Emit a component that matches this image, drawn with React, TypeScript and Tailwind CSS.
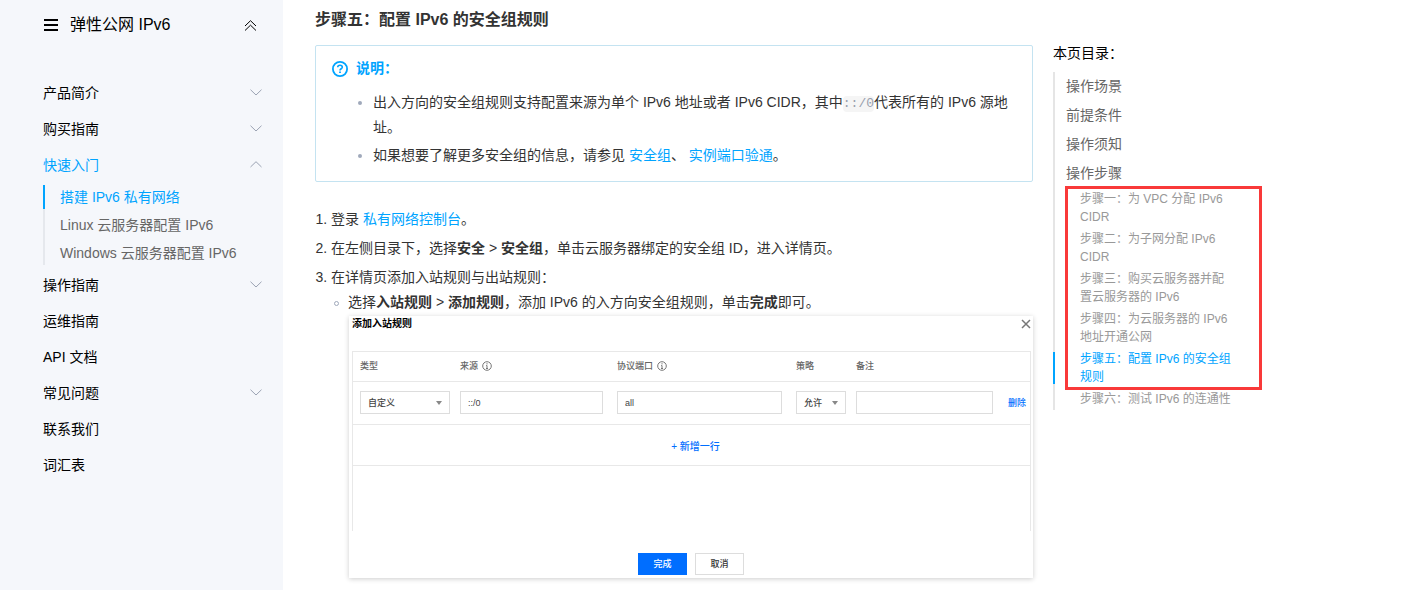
import type { ReactNode } from 'react'

interface NavItem {
  title: string
  expandable?: boolean
  children?: string[]
}

const navItems: NavItem[] = [
  { title: '产品简介', expandable: true },
  { title: '购买指南', expandable: true },
  {
    title: '快速入门',
    expandable: true,
    children: ['搭建 IPv6 私有网络', 'Linux 云服务器配置 IPv6', 'Windows 云服务器配置 IPv6'],
  },
  { title: '操作指南', expandable: true },
  { title: '运维指南' },
  { title: 'API 文档' },
  { title: '常见问题', expandable: true },
  { title: '联系我们' },
  { title: '词汇表' },
]

const sections = ['操作场景', '前提条件', '操作须知', '操作步骤']

const steps = [
  '步骤一：为 VPC 分配 IPv6 CIDR',
  '步骤二：为子网分配 IPv6 CIDR',
  '步骤三：购买云服务器并配置云服务器的 IPv6',
  '步骤四：为云服务器的 IPv6 地址开通公网',
  '步骤五：配置 IPv6 的安全组规则',
]

export default function App() {
  return (
    <div
      lang="zh-CN"
      className="flex min-h-screen bg-white font-['Liberation_Sans','Noto_Sans_CJK_SC',sans-serif] text-sm text-[#333]"
    >
      <Sidebar />
      <Article />
      <Toc />
    </div>
  )
}

function Sidebar() {
  return (
    <aside className="w-[283px] shrink-0 bg-[#f5f7fb] text-black">
      <div className="flex h-[50px] items-center pr-[26px] pl-11">
        <svg width="14" height="12" viewBox="0 0 14 12" className="shrink-0">
          <path d="M0 1h14M0 6h14M0 11h14" stroke="currentColor" strokeWidth="2" />
        </svg>
        <h2 className="ml-3 flex-1 text-base leading-6">弹性公网 IPv6</h2>
        <button type="button" aria-label="收起目录">
          <svg width="13" height="11" viewBox="0 0 13 11" fill="none" stroke="currentColor">
            <path d="M1 6 6.5.7 12 6M1 10.5l5.500-5.300 5.500 5.300" />
          </svg>
        </button>
      </div>
      <nav className="mt-[25px] pr-5 pl-[43px]">
        {navItems.map(item => (
          <div key={item.title}>
            <button
              type="button"
              className={`flex h-9 w-full items-center justify-between text-left ${item.children ? 'text-[#00a4ff]' : ''}`}
            >
              {item.title}
              {item.expandable && <Chevron up={!!item.children} />}
            </button>
            {item.children && (
              <ul className="my-0.5 flex flex-col gap-1 border-l-2 border-[#e5e8ed]">
                {item.children.map((child, i) => (
                  <li
                    key={child}
                    className={`-ml-0.5 border-l-2 pl-[15px] leading-6 ${i === 0 ? 'border-[#00a4ff] text-[#00a4ff]' : 'border-transparent text-[#666]'}`}
                  >
                    <a href="#">{child}</a>
                  </li>
                ))}
              </ul>
            )}
          </div>
        ))}
      </nav>
    </aside>
  )
}

function Chevron({ up }: { up: boolean }) {
  return (
    <svg width="14" height="8" viewBox="0 0 14 8" fill="none" stroke="#9ba3b3">
      <path d={up ? 'M1.500 6 7 .7 12.500 6' : 'M1.500.7 7 6 12.500.7'} />
    </svg>
  )
}

function Link({ children }: { children: ReactNode }) {
  return <a href="#" className="text-[#00a4ff]">{children}</a>
}

function Article() {
  return (
    <main className="ml-8 max-w-[718px] min-w-0 flex-1 leading-[25px]">
      <h3 className="pt-2 text-base leading-6 font-bold">步骤五：配置 IPv6 的安全组规则</h3>

      <section className="mt-[13px] rounded-xs border border-[#c4e3f1] px-4 pt-2.5 pb-[13px]">
        <h4 className="flex items-center gap-2 font-bold text-[#00a4ff]">
          <svg width="16" height="16" viewBox="0 0 16 16" fill="none" stroke="currentColor" strokeWidth="1.8">
            <circle cx="8" cy="8" r="7.1" />
            <path d="M5.700 6.300C5.700 4.900 6.700 4.200 8 4.200s2.300.8 2.300 2c0 1.500-2.300 1.600-2.300 3.200" strokeWidth="1.6" />
            <path d="M7.100 10.400h1.800v1.700H7.100z" fill="currentColor" stroke="none" />
          </svg>
          说明：
        </h4>
        <ul className="mt-[9px] flex flex-col gap-[3px] pl-[41px]">
          <Bullet>
            出入方向的安全组规则支持配置来源为单个 IPv6 地址或者 IPv6 CIDR，其中
            <code className="inline-block rounded-sm bg-[#f5f5f5] font-['Liberation_Mono',monospace] text-[13px] leading-4 text-[#999fae]">::/0</code>
            代表所有的 IPv6 源地址。
          </Bullet>
          <Bullet>
            如果想要了解更多安全组的信息，请参见 <Link>安全组</Link>、 <Link>实例端口验通</Link>。
          </Bullet>
        </ul>
      </section>

      <ol className="mt-[25px] flex list-decimal flex-col gap-1 pl-4">
        <li>登录 <Link>私有网络控制台</Link>。</li>
        <li>在左侧目录下，选择<b>安全</b> &gt; <b>安全组</b>，单击云服务器绑定的安全组 ID，进入详情页。</li>
        <li>
          在详情页添加入站规则与出站规则：
          <ul className="pl-[17px]">
            <li className="relative before:absolute before:top-[11px] before:-left-3.5 before:size-[5px] before:rounded-full before:border before:border-[#a0a9bb]">
              选择<b>入站规则</b> &gt; <b>添加规则</b>，添加 IPv6 的入方向安全组规则，单击<b>完成</b>即可。
              <RuleDialog />
            </li>
          </ul>
        </li>
      </ol>
    </main>
  )
}

function Bullet({ children }: { children: ReactNode }) {
  return (
    <li className="relative before:absolute before:top-[11px] before:-left-[15px] before:size-1 before:rounded-full before:bg-[#a0a9bb]">
      {children}
    </li>
  )
}

const fieldClass = 'block h-[23px] w-full rounded-none border border-[#ddd] bg-white px-[7px] text-[9px] text-[#444] outline-none'

function RuleDialog() {
  return (
    <div className="mt-px ml-px bg-white text-[9px] leading-3 shadow-[0_1px_5px_rgba(0,0,0,0.2)]">
      <div className="flex h-[35px] items-start justify-between pt-0.5 pr-0.5 pl-[3px]">
        <h5 className="text-[10px] font-bold text-black">添加入站规则</h5>
        <button type="button" aria-label="关闭" className="pt-px">
          <svg width="10" height="10" viewBox="0 0 10 10" stroke="#777" strokeWidth="1.5">
            <path d="m1 1 8 8M9 1 1 9" />
          </svg>
        </button>
      </div>

      <div className="mr-0.5 ml-[3px] h-[180px] border-x border-t border-[#e8e8e8]">
        <table className="w-full table-fixed border-collapse text-left">
          <thead className="text-[#666]">
            <tr className="h-[29px] border-b border-[#e8e8e8]">
              <th className="w-[100px] pl-[7px] font-medium">类型</th>
              <th className="w-[157px] pl-[7px] font-medium">
                <span className="flex items-center gap-1">来源<InfoIcon /></span>
              </th>
              <th className="w-[179px] pl-[7px] font-medium">
                <span className="flex items-center gap-1">协议端口<InfoIcon /></span>
              </th>
              <th className="w-[60px] pl-[7px] font-medium">策略</th>
              <th className="pl-[7px] font-medium">备注</th>
              <th className="w-[30px]" aria-label="操作" />
            </tr>
          </thead>
          <tbody>
            <tr className="h-[43px] border-b border-[#e8e8e8]">
              <td className="pr-[3px] pl-[7px]"><Picker label="类型" value="自定义" /></td>
              <td className="pr-[7px] pl-[7px]">
                <input aria-label="来源" defaultValue="::/0" className={fieldClass} />
              </td>
              <td className="pr-[7px] pl-[7px]">
                <input aria-label="协议端口" defaultValue="all" className={fieldClass} />
              </td>
              <td className="pr-[3px] pl-[7px]"><Picker label="策略" value="允许" /></td>
              <td className="pr-[7px] pl-[7px]">
                <input aria-label="备注" className={fieldClass} />
              </td>
              <td className="pl-2 whitespace-nowrap"><a href="#" className="font-medium text-[#006eff]">删除</a></td>
            </tr>
            <tr className="h-[41px] border-b border-[#e8e8e8]">
              <td colSpan={6} className="pt-1 text-center">
                <button type="button" className="pl-2 text-[10px] font-medium text-[#006eff]">+ 新增一行</button>
              </td>
            </tr>
          </tbody>
        </table>
      </div>

      <div className="flex justify-center gap-2 pt-[22px] pb-[3px]">
        <button type="button" className="h-[22px] w-[49px] bg-[#006eff] font-medium text-white">完成</button>
        <button type="button" className="h-[22px] w-[49px] border border-[#ddd] bg-white font-medium text-[#333]">取消</button>
      </div>
    </div>
  )
}

function Picker({ label, value }: { label: string; value: string }) {
  return (
    <div className="relative">
      <select aria-label={label} className={`${fieldClass} appearance-none font-medium`}>
        <option>{value}</option>
      </select>
      <svg width="6" height="4" viewBox="0 0 6 4" className="pointer-events-none absolute top-[10px] right-2">
        <path d="M0 0h6L3 4z" fill="#888" />
      </svg>
    </div>
  )
}

function InfoIcon() {
  return (
    <svg width="10" height="10" viewBox="0 0 10 10" fill="none" stroke="#777">
      <circle cx="5" cy="5" r="4.3" />
      <path d="M5 2.200v1.200M4.200 4.500H5v3M4 7.500h2" />
    </svg>
  )
}

function Toc() {
  return (
    <aside className="ml-5 w-[209px] shrink-0 pt-[41px]">
      <h4 className="leading-6 text-black">本页目录：</h4>
      <nav className="mt-[7px] border-l-2 border-[#e5e5e5] text-[#666]">
        <ul>
          {sections.map(section => (
            <li key={section} className="h-[29px] pl-[11px] leading-[29px]">
              <a href="#">{section}</a>
            </li>
          ))}
        </ul>
        <div className="relative">
          <ul className="text-xs leading-[18px] text-[#999]">
            {steps.map((step, i) => (
              <li
                key={step}
                className={`relative py-0.5 pl-[25px] ${i === 4 ? 'text-[#00a4ff] before:absolute before:inset-y-1 before:-left-0.5 before:w-0.5 before:bg-[#00a4ff]' : ''}`}
              >
                <a href="#" className="block w-[154px]">{step}</a>
              </li>
            ))}
          </ul>
          <div className="pointer-events-none absolute -top-0.5 right-0 -bottom-0.5 left-2.5 border-3 border-[#f93939]" />
        </div>
        <ul className="text-xs leading-[18px] text-[#999]">
          <li className="py-0.5 pl-[25px]">
            <a href="#">步骤六：测试 IPv6 的连通性</a>
          </li>
        </ul>
      </nav>
    </aside>
  )
}
